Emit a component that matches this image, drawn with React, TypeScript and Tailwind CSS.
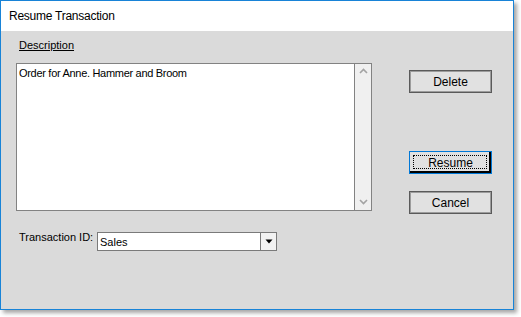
import React from 'react';

const Chevron: React.FC<{ up?: boolean }> = ({ up }) => (
    <svg width="9" height="6" viewBox="0 0 9 6" className="block">
        <path
            d={up ? 'M1 5 L4.5 1.5 L8 5' : 'M1 1 L4.5 4.5 L8 1'}
            fill="none"
            stroke="#a3a3a3"
            strokeWidth="1.6"
        />
    </svg>
);

const Button: React.FC<{ label: string; focused?: boolean; className?: string }> = ({ label, focused, className = '' }) => (
    <div
        className={
            'relative w-[83px] h-[23px] flex items-center justify-center bg-[#e1e1e1] text-[12px] leading-[14px] text-black ' +
            (focused
                ? 'border border-[#0078d7] shadow-[inset_-2px_-2px_0_#000] '
                : 'border border-[#5a5a5a] shadow-[inset_1px_1px_0_#9c9c9c,inset_-1px_-1px_0_#9c9c9c] ') +
            className
        }
    >
        {focused && <div className="absolute top-[3px] left-[3px] right-[4px] bottom-[4px] border border-dotted border-black" />}
        <span className="relative">{label}</span>
    </div>
);

const App: React.FC = () => {
    return (
        <div className="w-[521px] h-[317px] bg-white" style={{ fontFamily: '"Liberation Sans", Arial, sans-serif' }}>
            <div className="w-[514px] h-[310px] border border-[#1883d7] flex flex-col shadow-[3px_3px_4px_rgba(0,0,0,0.35)]">
                {/* Title bar */}
                <div className="h-[30px] bg-white pl-[8px] flex items-center text-[12px] tracking-[-0.25px] text-black">Resume Transaction</div>

                {/* Body */}
                <div className="flex-1 bg-[#dadada] flex">
                    <div className="ml-[15px] pt-[7px] flex flex-col">
                        <div className="ml-[3px] text-[11px] leading-[14px] text-black underline">Description</div>

                        <div className="mt-[11px] w-[356px] h-[148px] border border-[#828282] bg-white flex">
                            <div className="flex-1 pl-[2px] pt-[2px] text-[11px] leading-[14px] tracking-[-0.3px] text-black">
                                Order for Anne. Hammer and Broom
                            </div>
                            <div className="w-[17px] border-l border-[#828282] bg-[#f0f0f0] flex flex-col items-center justify-between pt-[4px] pb-[5px]">
                                <Chevron up />
                                <Chevron />
                            </div>
                        </div>

                        <div className="mt-[19px] flex items-start">
                            <div className="ml-[3px] w-[78px] text-[11px] leading-[14px] text-black">Transaction ID:</div>
                            <div className="mt-[2px] w-[180px] h-[19px] border border-[#7a7a7a] bg-white flex">
                                <div className="flex-1 pl-[2px] pt-[2px] text-[11px] leading-[14px] text-black">Sales</div>
                                <div className="w-[16px] border-l border-[#7a7a7a] bg-[#f2f2f2] flex items-center justify-center">
                                    <svg width="8" height="5" viewBox="0 0 8 5" className="block">
                                        <path d="M0.5 0.5 L7.5 0.5 L4 4.5 Z" fill="#000" />
                                    </svg>
                                </div>
                            </div>
                        </div>
                    </div>

                    <div className="ml-[37px] pt-[39px] flex flex-col">
                        <Button label="Delete" />
                        <Button label="Resume" focused className="mt-[58px]" />
                        <Button label="Cancel" className="mt-[17px]" />
                    </div>
                </div>
            </div>
        </div>
    );
};

export default App;
